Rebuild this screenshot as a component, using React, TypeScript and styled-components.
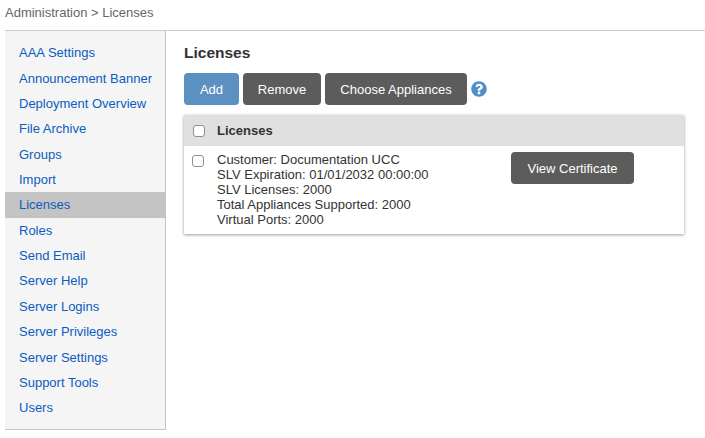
import React from "react";
import styled, { createGlobalStyle } from "styled-components";

const Global = createGlobalStyle`
  html, body { margin: 0; padding: 0; background: #fff; }
  body { font-family: "Liberation Sans", Arial, sans-serif; font-size: 13px; color: #333; }
`;
const Page = styled.div`
  width: 705px; height: 438px; overflow: hidden; padding-left: 5px; box-sizing: border-box;
`;
const Breadcrumb = styled.div`
  height: 25px; padding-top: 5px; line-height: 15px; color: #666; font-size: 13px;
  border-bottom: 1px solid #ccc;
`;
const Body = styled.div`display: flex; align-items: flex-start;`;
const Sidebar = styled.nav`
  width: 160px; height: 389px; background: #f5f5f5; border-right: 1px solid #c4c4c4; border-bottom: 1px solid #c4c4c4;
  padding-top: 9.2px; flex: none;
`;
const NavItem = styled.a<{ $active?: boolean }>`
  display: block; height: 25.36px; line-height: 25.36px; padding-left: 14px; color: #0b5cc0; font-size: 13px;
  background: ${(p) => (p.$active ? "#c4c4c4" : "transparent")};
`;
const Main = styled.main`flex: 1; padding: 13px 21px 0 18px; min-width: 0;`;
const Title = styled.h1`margin: 0 0 11px; font-size: 15.5px; line-height: 18px; font-weight: 700; color: #333;`;
const Toolbar = styled.div`display: flex; align-items: center; gap: 4px; margin-bottom: 10px;`;
const Button = styled.button<{ $primary?: boolean; $w: number }>`
  width: ${(p) => p.$w}px; height: 32px; padding: 0; border: 0; border-radius: 4px;
  background: ${(p) => (p.$primary ? "#5b90c0" : "#5c5c5c")}; color: #fff;
  font: 13px "Liberation Sans", Arial, sans-serif;
`;
const Help = styled.svg`width: 16px; height: 16px;`;
const Card = styled.section`background: #fff; box-shadow: 0 1px 3px rgba(0,0,0,.4);`;
const CardHead = styled.div`
  display: flex; align-items: center; height: 31px; background: #e0e0e0; font-weight: 700; padding-left: 9px;
`;
const Check = styled.input.attrs({ type: "checkbox" })`
  appearance: none; width: 12px; height: 12px; margin: 0 12px 0 0; border: 1px solid #8f8f8f; border-radius: 3px; background: #fff; flex: none;
`;
const Row = styled.div`display: flex; align-items: flex-start; padding: 6px 0 0 8px; height: 88px; box-sizing: border-box;`;
const RowCheck = styled(Check)`margin-top: 3px; margin-right: 13px;`;
const Details = styled.div`width: 294px; line-height: 15px; color: #333;`;

const items = ["AAA Settings","Announcement Banner","Deployment Overview","File Archive","Groups","Import","Licenses","Roles","Send Email","Server Help","Server Logins","Server Privileges","Server Settings","Support Tools","Users"];

export default function App() {
  return (
    <Page>
      <Global />
      <Breadcrumb>Administration &gt; Licenses</Breadcrumb>
      <Body>
        <Sidebar>
          {items.map((t) => <NavItem key={t} $active={t === "Licenses"}>{t}</NavItem>)}
        </Sidebar>
        <Main>
          <Title>Licenses</Title>
          <Toolbar>
            <Button $primary $w={55}>Add</Button>
            <Button $w={78}>Remove</Button>
            <Button $w={142}>Choose Appliances</Button>
            <Help viewBox="0 0 512 512"><path fill="#4f8fc9" d="M504 256c0 137-111 248-248 248S8 393 8 256 119 8 256 8s248 111 248 248zM262.700 90c-54.500 0-89.300 23-116.500 63.800-3.500 5.300-2.400 12.400 2.700 16.300l34.700 26.300c5.200 3.900 12.600 3 16.700-2.100 17.900-22.700 30.100-35.800 57.300-35.800 20.400 0 45.700 13.100 45.700 33 0 15-12.400 22.700-32.600 34-23.600 13.200-54.800 29.700-54.800 70.900V302c0 6.600 5.400 12 12 12h56c6.600 0 12-5.400 12-12v-1.300c0-28.600 83.500-29.800 83.500-107.200 0-58.300-60.500-103.500-116.700-103.500zM256 338c-25.400 0-46 20.600-46 46s20.600 46 46 46 46-20.600 46-46-20.600-46-46-46z"/></Help>
          </Toolbar>
          <Card>
            <CardHead><Check />Licenses</CardHead>
            <Row>
              <RowCheck />
              <Details>
                Customer: Documentation UCC<br />
                SLV Expiration: 01/01/2032 00:00:00<br />
                SLV Licenses: 2000<br />
                Total Appliances Supported: 2000<br />
                Virtual Ports: 2000
              </Details>
              <Button $w={123}>View Certificate</Button>
            </Row>
          </Card>
        </Main>
      </Body>
    </Page>
  );
}
